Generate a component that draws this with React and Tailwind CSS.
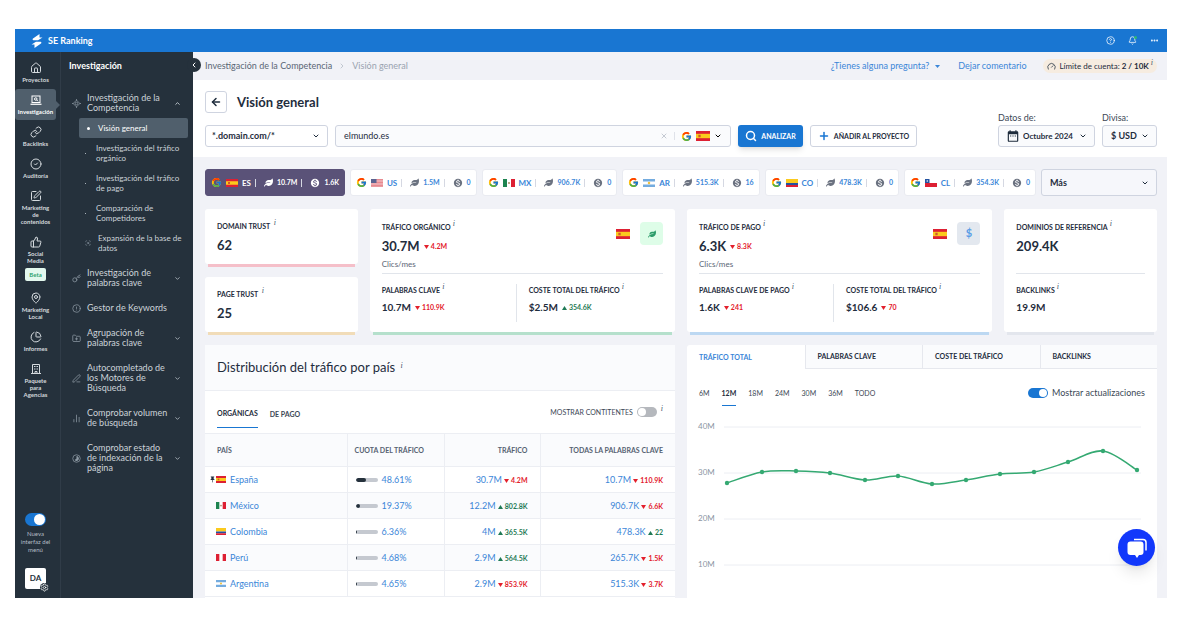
import React, { useState } from 'react';
import {
  ArrowLeft,
  Bell,
  ChartNoAxesColumn,
  ChevronDown,
  ChevronLeft,
  ChevronRight,
  ChevronUp,
  CircleAlert,
  CircleCheck,
  CircleHelp,
  Ellipsis,
  FolderPlus,
  Gauge,
  House,
  Key,
  Link,
  MapPin,
  PenLine,
  PieChart,
  Plus,
  ScanSearch,
  Search,
  Settings,
  SquarePen,
  ThumbsUp,
  X,
} from 'lucide-react';
import { FcGoogle } from 'react-icons/fc';
import { FaLeaf } from 'react-icons/fa';
import { MdDateRange, MdMonetizationOn, MdPushPin } from 'react-icons/md';

const railItems = [
  { label: 'Proyectos', icon: House },
  { label: 'Investigación', icon: LaptopSearch, active: true },
  { label: 'Backlinks', icon: Link },
  { label: 'Auditoría', icon: CircleCheck },
  { label: 'Marketing de contenidos', icon: SquarePen },
  { label: 'Social Media', icon: ThumbsUp, badge: 'Beta' },
  { label: 'Marketing Local', icon: MapPin },
  { label: 'Informes', icon: PieChart },
  { label: 'Paquete para Agencias', icon: Office },
];

const subItems = [
  'Investigación del tráfico orgánico',
  'Investigación del tráfico de pago',
  'Comparación de Competidores',
];

const menuItems = [
  { label: 'Investigación de palabras clave', icon: Key, arrow: true },
  { label: 'Gestor de Keywords', icon: CircleAlert },
  { label: 'Agrupación de palabras clave', icon: FolderPlus, arrow: true },
  { label: 'Autocompletado de los Motores de Búsqueda', icon: PenLine, arrow: true },
  { label: 'Comprobar volumen de búsqueda', icon: ChartNoAxesColumn, arrow: true },
  { label: 'Comprobar estado de indexación de la página', icon: IndexStatus, arrow: true },
];

const markets = [
  { code: 'ES', organic: '10.7M', paid: '1.6K' },
  { code: 'US', organic: '1.5M', paid: '0' },
  { code: 'MX', organic: '906.7K', paid: '0' },
  { code: 'AR', organic: '515.3K', paid: '16' },
  { code: 'CO', organic: '478.3K', paid: '0' },
  { code: 'CL', organic: '354.3K', paid: '0' },
];

const countries = [
  { code: 'ES', name: 'España', share: 48.61, traffic: '30.7M', diff: '4.2M', up: false, keywords: '10.7M', kwDiff: '110.9K', kwUp: false, pinned: true },
  { code: 'MX', name: 'México', share: 19.37, traffic: '12.2M', diff: '802.8K', up: true, keywords: '906.7K', kwDiff: '6.6K', kwUp: false },
  { code: 'CO', name: 'Colombia', share: 6.36, traffic: '4M', diff: '365.5K', up: true, keywords: '478.3K', kwDiff: '22', kwUp: true },
  { code: 'PE', name: 'Perú', share: 4.68, traffic: '2.9M', diff: '564.5K', up: true, keywords: '265.7K', kwDiff: '1.5K', kwUp: false },
  { code: 'AR', name: 'Argentina', share: 4.65, traffic: '2.9M', diff: '853.9K', up: false, keywords: '515.3K', kwDiff: '3.7K', kwUp: false },
];

const chartTabs = ['TRÁFICO TOTAL', 'PALABRAS CLAVE', 'COSTE DEL TRÁFICO', 'BACKLINKS'];
const ranges = ['6M', '12M', '18M', '24M', '30M', '36M', 'TODO'];

const trafficPoints = [
  [40, 72], [75, 61], [109, 60], [143, 62], [178, 69], [211, 65], [245, 73],
  [279, 69], [313, 63], [347, 61], [381, 51], [416, 40], [450, 59],
];

function LaptopSearch({ className }) {
  return (
    <svg viewBox="0 0 24 24" fill="none" stroke="currentColor" strokeWidth="2" className={className}>
      <rect x="4" y="4" width="16" height="13" />
      <path d="M1 20.5h22" strokeWidth="2.5" />
      <circle cx="11.5" cy="10" r="2.5" />
      <path d="m13.5 12 2.5 2.5" />
    </svg>
  );
}

function Office({ className }) {
  return (
    <svg viewBox="0 0 24 24" fill="none" stroke="currentColor" strokeWidth="2" className={className}>
      <path d="M5 21V3h14v18M2 21h20M10 21v-4h4v4" />
      <path d="M9 6v2M12 6v2M15 6v2M9 11v2M12 11v2M15 11v2" />
    </svg>
  );
}

function Competitor({ className }) {
  return (
    <svg viewBox="0 0 24 24" fill="none" stroke="currentColor" strokeWidth="2" className={className}>
      <path d="M12 3 21 12 12 21 3 12z" />
      <circle cx="12" cy="12" r="3.5" />
      <path d="M12 0v4M12 20v4M0 12h4M20 12h4" />
    </svg>
  );
}

function IndexStatus({ className }) {
  return (
    <svg viewBox="0 0 24 24" fill="none" stroke="currentColor" strokeWidth="2" className={className}>
      <circle cx="12" cy="12" r="10" />
      <path d="M12 5.5a6.5 6.5 0 1 1-5 10.700L12 12z" fill="currentColor" stroke="none" />
    </svg>
  );
}

function Logo() {
  return (
    <svg viewBox="0 0 24 28" fill="white" className="h-3.5 w-3">
      <path d="M17 0 4 9c-1.500 1.200-.8 3.500 1 3.500h9L23 7h-6z" />
      <path d="m7 28 13-9c1.500-1.200.8-3.500-1-3.500h-9L1 21h6z" />
    </svg>
  );
}

function Flag({ code, className = 'h-2 w-3' }) {
  return (
    <svg viewBox="0 0 24 16" preserveAspectRatio="none" className={`shrink-0 ${className}`}>
      {code === 'ES' && (
        <>
          <path fill="#dd2033" d="M0 0h24v16H0z" />
          <path fill="#fbca1d" d="M0 4.500h24v7H0z" />
          <path fill="#cf5a2a" d="M4 6h4v4H4z" />
        </>
      )}
      {code === 'US' && (
        <>
          <path fill="#f3c9cd" d="M0 0h24v16H0z" />
          <path stroke="#e0686f" strokeWidth="1.3" d="M0 1h24M0 4h24M0 7h24M0 10h24M0 13h24M0 15.500h24" />
          <path fill="#5b6390" d="M0 0h11v8H0z" />
        </>
      )}
      {code === 'MX' && (
        <>
          <path fill="#fff" d="M0 0h24v16H0z" />
          <path fill="#1d8450" d="M0 0h8v16H0z" />
          <path fill="#dd2033" d="M16 0h8v16h-8z" />
          <circle cx="12" cy="8" r="2" fill="#a98a63" />
        </>
      )}
      {code === 'AR' && (
        <>
          <path fill="#fff" d="M0 0h24v16H0z" />
          <path fill="#74acdf" d="M0 0h24v5H0zM0 11h24v5H0z" />
          <circle cx="12" cy="8" r="2.500" fill="#f3c23c" />
        </>
      )}
      {code === 'CO' && (
        <>
          <path fill="#fbca1d" d="M0 0h24v8H0z" />
          <path fill="#2452a0" d="M0 8h24v4H0z" />
          <path fill="#dd2033" d="M0 12h24v4H0z" />
        </>
      )}
      {code === 'CL' && (
        <>
          <path fill="#fff" d="M8 0h16v8H8z" />
          <path fill="#dd2033" d="M0 8h24v8H0z" />
          <path fill="#2452a0" d="M0 0h9v8H0z" />
          <circle cx="4.500" cy="4" r="1.500" fill="#fff" />
        </>
      )}
      {code === 'PE' && (
        <>
          <path fill="#fff" d="M0 0h24v16H0z" />
          <path fill="#dd2033" d="M0 0h8v16H0zM16 0h8v16h-8z" />
        </>
      )}
    </svg>
  );
}

function Info() {
  return <sup className="ml-0.5 font-['Liberation_Serif',serif] text-[8px] font-normal italic text-slate-600">i</sup>;
}

function Diff({ up, value }) {
  return (
    <span className={`text-[7px] font-bold ${up ? 'text-[#1f7a55]' : 'text-[#e3202c]'}`}>
      <svg viewBox="0 0 10 8" fill="currentColor" className="mr-[2px] inline h-1 w-[5px]">
        <path d={up ? 'M5 0l5 8H0z' : 'M0 0h10L5 8z'} />
      </svg>
      {value}
    </span>
  );
}

function Picker({ id, label, options, wrap, className, icon }) {
  return (
    <div className={`relative flex items-center ${wrap}`}>
      {icon}
      <select
        id={id}
        aria-label={label}
        className={`w-full appearance-none rounded-[3px] border border-[#cfd4e0] font-bold text-[#1f2d3d] outline-none ${className}`}
      >
        {options.map((option) => (
          <option key={option}>{option}</option>
        ))}
      </select>
      <ChevronDown strokeWidth={3} className="pointer-events-none absolute right-2 size-2 text-[#1f2d3d]" />
    </div>
  );
}

function Toggle({ id, checked, onChange, className }) {
  return (
    <input
      id={id}
      type="checkbox"
      checked={checked}
      onChange={(e) => onChange(e.target.checked)}
      className={`shrink-0 appearance-none rounded-full bg-[#b5b8bd] p-px before:block before:rounded-full before:bg-white checked:bg-[#1976d2] ${className}`}
    />
  );
}

function Rail() {
  const [newMenu, setNewMenu] = useState(true);

  return (
    <nav className="flex w-[46px] shrink-0 flex-col items-center border-r border-[#303c48] pt-[5px] pb-[9px] text-[6px] leading-[7px] font-bold text-[#d5dade]">
      <div className="flex w-full flex-col gap-px">
        {railItems.map(({ label, icon: Icon, active, badge }) => (
          <a
            key={label}
            href="#"
            className={`relative mr-1 flex flex-col items-center gap-[2px] py-[5px] text-center ${active ? 'rounded-[3px] bg-[#505f6c] text-white' : ''}`}
          >
            <Icon className="size-3" />
            <span className={active ? '' : 'w-[31px]'}>{label}</span>
            {badge && (
              <span className="mt-[2px] rounded-[2px] bg-[#e3f8ee] px-1 py-[3px] text-[#2fa36f]">{badge}</span>
            )}
            {active && (
              <span className="absolute top-1/2 -right-1 -translate-y-1/2 border-y-4 border-l-4 border-y-transparent border-l-[#505f6c]" />
            )}
          </a>
        ))}
      </div>
      <div className="mt-auto mr-1 flex flex-col items-center gap-1">
        <Toggle id="new-menu" checked={newMenu} onChange={setNewMenu} className="h-[13px] w-[21px] before:size-[11px] checked:before:translate-x-2" />
        <label htmlFor="new-menu" className="w-[34px] text-center leading-[8px] font-normal text-[#b3bcc4]">
          Nueva interfaz del menú
        </label>
      </div>
      <button type="button" aria-label="Cuenta" className="relative mt-[14px] mr-1 size-[21px] rounded-[2px] bg-white text-[8px] text-[#25313c]">
        DA
        <Settings className="absolute -right-[3px] -bottom-[3px] size-[9px] rounded-full bg-[#25313c] text-white" />
      </button>
    </nav>
  );
}

function Submenu() {
  return (
    <aside className="relative w-[132px] shrink-0 pt-[9px] text-[9px] leading-[10px] text-[#ccd3d9]">
      <h2 className="pl-2 font-bold text-white">Investigación</h2>
      <button
        type="button"
        aria-label="Contraer menú"
        className="absolute top-1.5 -right-2 z-10 flex size-3.5 items-center justify-center rounded-full bg-[#25313c] text-white"
      >
        <ChevronLeft strokeWidth={3} className="size-2" />
      </button>

      <a href="#" className="mt-[22px] flex items-center pr-3 pl-[11px]">
        <Competitor className="size-[9px] shrink-0 text-[#8d99a4]" />
        <span className="ml-1.5 flex-1 pr-2">Investigación de la Competencia</span>
        <ChevronUp strokeWidth={3} className="size-[7px]" />
      </a>
      <ul className="mt-[5px] mb-[15px] flex flex-col gap-2.5 pr-[5px] pl-[18px] text-[8px]">
        <li className="-mb-[5px]">
          <a href="#" className="flex h-5 items-center rounded-[2px] bg-[#505f6c] text-white">
            <span className="mx-2 size-[3px] rounded-full bg-white" />
            Visión general
          </a>
        </li>
        {subItems.map((item) => (
          <li key={item}>
            <a href="#" className="flex items-center">
              <span className="mr-2.5 ml-1.5 size-px shrink-0 bg-[#aab3bb]" />
              <span>{item}</span>
            </a>
          </li>
        ))}
        <li>
          <a href="#" className="flex items-center gap-[7px] pl-1.5">
            <ScanSearch className="size-1.5 shrink-0 text-[#8d99a4]" />
            Expansión de la base de datos
          </a>
        </li>
      </ul>

      <ul className="flex flex-col gap-[15px] pr-3 pl-[11px]">
        {menuItems.map(({ label, icon: Icon, arrow }) => (
          <li key={label}>
            <a href="#" className="flex items-center">
              <Icon className="size-[9px] shrink-0 text-[#8d99a4]" />
              <span className="ml-1.5 flex-1">{label}</span>
              {arrow && <ChevronDown strokeWidth={3} className="ml-1.5 size-[7px] shrink-0 text-[#aab3bb]" />}
            </a>
          </li>
        ))}
      </ul>
    </aside>
  );
}

function SearchHeader() {
  return (
    <header className="bg-white pt-[11px] pr-2.5 pb-2.5 pl-3">
      <div className="flex items-center gap-2.5">
        <button type="button" aria-label="Volver" className="flex size-[22px] items-center justify-center rounded-[3px] border border-[#cfd4e0] text-[#1f2d3d]">
          <ArrowLeft strokeWidth={3} className="size-3" />
        </button>
        <h1 className="text-[13px] leading-4 font-bold text-[#1f2d3d]">Visión general</h1>
      </div>

      <form className="flex items-end gap-[7px]" onSubmit={(e) => e.preventDefault()}>
        <Picker label="Ámbito" options={['*.domain.com/*']} wrap="w-[123px]" className="h-[22px] pl-1.5 text-[9px]" />
        <div className="flex h-[22px] min-w-0 flex-1 items-center rounded-[3px] border border-[#cfd4e0] bg-[#fafbfd] px-2">
          <input aria-label="Dominio" defaultValue="elmundo.es" className="min-w-0 flex-1 bg-transparent text-[9px] text-[#1f2d3d] outline-none" />
          <button type="button" aria-label="Borrar" className="text-[#a9b1bc]">
            <X className="size-2" />
          </button>
          <span className="mx-1.5 h-2 w-px bg-[#dfe2e9]" />
          <button type="button" aria-label="Buscador" className="flex items-center gap-1">
            <FcGoogle className="size-[11px]" />
            <Flag code="ES" className="h-2.5 w-3.5" />
            <ChevronDown strokeWidth={3} className="size-2" />
          </button>
        </div>
        <button type="submit" className="flex h-[22px] w-[65px] items-center justify-center gap-1 rounded-[3px] bg-[#1976d2] text-[7px] font-bold text-white shadow-md">
          <Search strokeWidth={3} className="size-3" />
          ANALIZAR
        </button>
        <button type="button" className="flex h-[22px] w-[107px] items-center justify-center gap-1 rounded-[3px] border border-[#cfd4e0] text-[7px] font-bold text-[#1f2d3d]">
          <Plus strokeWidth={3} className="size-3 text-[#1976d2]" />
          AÑADIR AL PROYECTO
        </button>
        <div className="ml-[74px] text-[9px] text-[#3c4856]">
          <label htmlFor="month" className="block leading-[10px]">Datos de:</label>
          <Picker
            id="month"
            options={['Octubre 2024']}
            wrap="mt-0.5 w-[97px]"
            className="h-[22px] bg-[#fafbfd] pl-6 text-[8px]"
            icon={<MdDateRange className="pointer-events-none absolute left-2 size-3.5 text-[#1f2d3d]" />}
          />
        </div>
        <div className="text-[9px] text-[#3c4856]">
          <label htmlFor="currency" className="block leading-[10px]">Divisa:</label>
          <Picker id="currency" options={['$ USD']} wrap="mt-0.5 w-[55px]" className="h-[22px] bg-[#fafbfd] pl-2" />
        </div>
      </form>
    </header>
  );
}

function Markets() {
  return (
    <div className="flex gap-[5px]">
      {markets.map(({ code, organic, paid }, i) => {
        const active = i === 0;
        return (
          <button
            key={code}
            type="button"
            className={`flex h-[27px] flex-auto items-center justify-center gap-1 rounded-[3px] border text-[7px] font-bold ${
              active ? 'border-[#5a5278] bg-[#5a5278] text-white' : 'border-[#e9ebf1] bg-white text-[#3b86d8]'
            }`}
          >
            <FcGoogle className="size-[11px]" />
            <Flag code={code} />
            <span className="text-[8px]">{code}</span>
            <span className="h-2 w-px bg-[#d5d8e2]" />
            <FaLeaf className={`ml-1 size-[9px] ${active ? '' : 'text-[#6b7280]'}`} />
            {organic}
            <span className="h-2 w-px bg-[#d5d8e2]" />
            <MdMonetizationOn className={`ml-1 size-[10px] ${active ? '' : 'text-[#6b7280]'}`} />
            {paid}
          </button>
        );
      })}
      <Picker label="Más países" options={['Más']} wrap="w-[116px]" className="h-[27px] bg-[#f6f7fb] pl-2 text-[9px]" />
    </div>
  );
}

function Trust({ title, value, edge }) {
  return (
    <section className={`rounded-[3px] bg-white px-3 pt-3 pb-[11px] text-[#1f2d3d] ${edge}`}>
      <h3 className="text-[7px] leading-[10px] font-bold">{title} <Info /></h3>
      <p className="mt-1.5 text-[13px] leading-4 font-bold">{value}</p>
    </section>
  );
}

function Metric({ title, value, up, diff }) {
  return (
    <div className="pt-px">
      <h3 className="text-[7px] leading-[10px] font-bold whitespace-nowrap">{title}<Info /></h3>
      <p className="mt-1 flex items-center gap-1 text-[10px] leading-4 font-bold">
        {value}
        {diff && <Diff up={up} value={diff} />}
      </p>
    </div>
  );
}

function Traffic({ title, value, diff, edge, badge, children }) {
  return (
    <section className={`rounded-[3px] bg-white px-3 pt-[13px] pb-2.5 text-[#1f2d3d] ${edge}`}>
      <div className="flex h-[52px] items-start border-b border-[#e1e5eb]">
        <div className="flex-1">
          <h3 className="text-[7px] leading-[10px] font-bold whitespace-nowrap">{title}<Info /></h3>
          <p className="mt-1.5 flex items-center gap-1 text-[13px] leading-4 font-bold">
            {value}
            {diff && <Diff value={diff} />}
          </p>
          {diff && <p className="mt-1 text-[8px] leading-3 text-[#5a6675]">Clics/mes</p>}
        </div>
        {badge}
      </div>
      <div className="mt-2.5">{children}</div>
    </section>
  );
}

function Summary() {
  return (
    <div className="grid grid-cols-[1fr_2fr_2fr_1fr] gap-3">
      <div className="grid gap-[13px]">
        <Trust title="DOMAIN TRUST" value="62" edge="shadow-[0_6px_0_-3px_#f5bfc9]" />
        <Trust title="PAGE TRUST" value="25" edge="shadow-[0_6px_0_-3px_#f1dcb8]" />
      </div>
      <Traffic
        title="TRÁFICO ORGÁNICO"
        value="30.7M"
        diff="4.2M"
        edge="shadow-[0_6px_0_-3px_#b5e0cc]"
        badge={
          <div className="flex items-center gap-2.5">
            <Flag code="ES" className="h-2.5 w-3.5" />
            <span className="flex size-[23px] items-center justify-center rounded-[4px] bg-[#defde8]">
              <FaLeaf className="size-2 text-[#2c9c6a]" />
            </span>
          </div>
        }
      >
        <div className="grid grid-cols-[134px_1fr]">
          <Metric title="PALABRAS CLAVE" value="10.7M" diff="110.9K" />
          <div className="h-[38px] border-l border-[#e1e5eb] pl-3">
            <Metric title="COSTE TOTAL DEL TRÁFICO" value="$2.5M" diff="354.6K" up />
          </div>
        </div>
      </Traffic>
      <Traffic
        title="TRÁFICO DE PAGO"
        value="6.3K"
        diff="8.3K"
        edge="shadow-[0_6px_0_-3px_#bcd8f2]"
        badge={
          <div className="flex items-center gap-2.5">
            <Flag code="ES" className="h-2.5 w-3.5" />
            <span className="flex size-[23px] items-center justify-center rounded-[4px] bg-[#e3e8ef] text-[11px] font-bold text-[#5a9ee6]">
              $
            </span>
          </div>
        }
      >
        <div className="grid grid-cols-[134px_1fr]">
          <Metric title="PALABRAS CLAVE DE PAGO" value="1.6K" diff="241" />
          <div className="h-[38px] border-l border-[#e1e5eb] pl-3">
            <Metric title="COSTE TOTAL DEL TRÁFICO" value="$106.6" diff="70" />
          </div>
        </div>
      </Traffic>
      <Traffic title="DOMINIOS DE REFERENCIA" value="209.4K" edge="shadow-[0_6px_0_-3px_#e3e6ed]">
        <Metric title="BACKLINKS" value="19.9M" />
      </Traffic>
    </div>
  );
}

function CountryTable() {
  const [continents, setContinents] = useState(false);

  return (
    <section className="rounded-t-[3px] bg-white text-[#1f2d3d]">
      <h2 className="flex h-[46px] items-center border-b border-[#eceef3] bg-[#fafbfd] px-3 text-[13px]">
        <span>Distribución del tráfico por país <Info /></span>
      </h2>
      <div className="flex h-[42px] items-center px-3 text-[7px] font-bold">
        <button type="button" className="mt-1 border-b border-[#1976d2] py-2">ORGÁNICAS</button>
        <button type="button" className="mt-1 ml-3 py-2 text-[#3c4856]">DE PAGO</button>
        <label htmlFor="continents" className="ml-auto mr-1 font-normal text-[#3c4856]">MOSTRAR CONTITENTES</label>
        <Toggle id="continents" checked={continents} onChange={setContinents} className="h-2.5 w-5 before:size-2 checked:before:translate-x-2.5" />
        <span className="ml-0.5"><Info /></span>
      </div>
      <table className="w-full table-fixed border-collapse text-right text-[9px] text-[#3b86d8]">
        <thead>
          <tr className="h-[33px] border-y border-[#eceef3] bg-[#fafbfd] text-[7px] text-[#566272]">
            <th className="w-[142px] border-r border-[#eceef3] pl-3 text-left">PAÍS</th>
            <th className="w-[97px] border-r border-[#eceef3] pl-[7px] text-left">CUOTA DEL TRÁFICO</th>
            <th className="w-[96px] border-r border-[#eceef3] pr-3">TRÁFICO</th>
            <th className="pr-3">TODAS LA PALABRAS CLAVE</th>
          </tr>
        </thead>
        <tbody>
          {countries.map((row) => (
            <tr key={row.name} className="h-[26px] border-b border-[#eceef3] even:bg-[#fafbfd]">
              <td className="border-r border-[#eceef3] pl-1 text-left">
                <div className="flex items-center">
                  <span className="w-[7px]">{row.pinned && <MdPushPin className="size-[7px] text-[#1f2d3d]" />}</span>
                  <Flag code={row.code} className="h-[7px] w-[10px]" />
                  <a href="#" className="ml-1">{row.name}</a>
                </div>
              </td>
              <td className="border-r border-[#eceef3] pl-2 text-left">
                <div className="flex items-center gap-1">
                  <span className="h-1 w-[22px] overflow-hidden rounded-full bg-[#c5c9d0]">
                    <span className="block h-full rounded-full bg-[#25313c]" style={{ width: `${row.share}%` }} />
                  </span>
                  {row.share}%
                </div>
              </td>
              <td className="border-r border-[#eceef3] pr-3">
                {row.traffic} <Diff up={row.up} value={row.diff} />
              </td>
              <td className="pr-3">
                {row.keywords} <Diff up={row.kwUp} value={row.kwDiff} />
              </td>
            </tr>
          ))}
        </tbody>
      </table>
    </section>
  );
}

function smoothPath(points) {
  // Catmull-Rom spline written as cubic segments
  return points.reduce((path, [x, y], i) => {
    if (i === 0) return `M${x} ${y}`;
    const prev = points[i - 1];
    const before = points[i - 2] || prev;
    const after = points[i + 1] || [x, y];
    const c1 = [prev[0] + (x - before[0]) / 6, prev[1] + (y - before[1]) / 6];
    const c2 = [x - (after[0] - prev[0]) / 6, y - (after[1] - prev[1]) / 6];
    return `${path} C${c1} ${c2} ${x} ${y}`;
  }, '');
}

function TrafficChart() {
  const [updates, setUpdates] = useState(true);

  return (
    <section className="rounded-t-[3px] bg-white text-[7px] text-[#1f2d3d]">
      <div className="grid grid-cols-4 font-bold">
        {chartTabs.map((tab, i) => (
          <button
            key={tab}
            type="button"
            className={`h-6 px-3 text-left ${i === 0 ? 'text-[#3b86d8]' : 'border-b border-l border-[#e6e8ee] bg-[#fafbfd]'}`}
          >
            {tab}
          </button>
        ))}
      </div>
      <div className="flex h-[42px] items-center gap-3 px-3">
        {ranges.map((range) => (
          <button
            key={range}
            type="button"
            className={`mt-3.5 border-b pb-1.5 ${range === '12M' ? 'border-[#1976d2] font-bold' : 'border-transparent text-[#3c4856]'}`}
          >
            {range}
          </button>
        ))}
        <div className="ml-auto flex items-center gap-1 pt-1.5 text-[9px] text-[#3c4856]">
          <Toggle id="updates" checked={updates} onChange={setUpdates} className="h-2.5 w-5 before:size-2 checked:before:translate-x-2.5" />
          <label htmlFor="updates">Mostrar actualizaciones</label>
        </div>
      </div>
      <svg viewBox="0 0 470 187" className="w-full">
        {['40M', '30M', '20M', '10M'].map((label, i) => (
          <g key={label}>
            <text x="11" y={18 + i * 46} fontSize="8" fill="#8b95a3">{label}</text>
            <path d={`M37 ${16 + i * 46}H454`} stroke="#eceef3" />
          </g>
        ))}
        <path d={smoothPath(trafficPoints)} fill="none" stroke="#35a972" strokeWidth="1.500" />
        {trafficPoints.map(([x, y]) => (
          <circle key={x} cx={x} cy={y} r="2.200" fill="#35a972" />
        ))}
      </svg>
    </section>
  );
}

export default function App() {
  return (
    <div className="h-screen bg-white pt-[29px] pr-[33px] pb-[29px] pl-[15px] font-[Lato,sans-serif]">
      <div className="relative flex h-full flex-col overflow-hidden">
        <div className="flex h-[23px] shrink-0 items-center bg-[#1976d2] px-4 text-white">
          <Logo />
          <span className="ml-[5px] text-[9px] font-bold">SE Ranking</span>
          <div className="ml-auto -mr-2 flex items-center gap-[13px]">
            <button type="button" aria-label="Ayuda"><CircleHelp className="size-[9px]" /></button>
            <button type="button" aria-label="Avisos" className="relative">
              <Bell className="size-[9px]" />
              <span className="absolute top-0 right-0 size-[3px] rounded-full bg-[#2eb872]" />
            </button>
            <button type="button" aria-label="Más opciones"><Ellipsis strokeWidth={3} className="size-[9px]" /></button>
          </div>
        </div>

        <div className="flex min-h-0 flex-1">
          <div className="flex bg-[#25313c]">
            <Rail />
            <Submenu />
          </div>

          <main className="min-w-0 flex-1 overflow-hidden bg-[#f1f2f7]">
            <div className="flex h-7 items-center pr-2.5 pl-3 text-[9px] text-[#3b86d8]">
              <a href="#" className="text-[#5a6675]">Investigación de la Competencia</a>
              <ChevronRight className="mx-1.5 size-2 text-[#a9b1bc]" />
              <span className="text-[#9aa3b0]">Visión general</span>
              <button type="button" className="ml-auto flex items-center gap-1.5">
                ¿Tienes alguna pregunta?
                <svg viewBox="0 0 10 6" fill="currentColor" className="h-[3px] w-[5px]"><path d="M0 0h10L5 6z" /></svg>
              </button>
              <a href="#" className="mr-4 ml-[18px]">Dejar comentario</a>
              <span className="flex h-3.5 items-center gap-1 rounded-full bg-[#f6ece0] px-1 text-[8px] text-[#1f2d3d]">
                <Gauge className="size-[9px]" />
                <span>Límite de cuenta: <b>2 / 10K</b><Info /></span>
              </span>
            </div>

            <SearchHeader />

            <div className="flex flex-col gap-[13px] pt-3 pr-2.5 pl-3">
              <Markets />
              <Summary />
              <div className="grid grid-cols-2 gap-3">
                <CountryTable />
                <TrafficChart />
              </div>
            </div>
          </main>
        </div>

        <button
          type="button"
          aria-label="Abrir chat"
          className="absolute right-3 bottom-8 flex size-[37px] items-center justify-center rounded-full bg-[#1238fb] shadow-lg"
        >
          <svg viewBox="0 0 24 24" className="size-6">
            <path d="M9 3.500h9a3 3 0 0 1 3 3v8" fill="none" stroke="white" strokeWidth="1.500" />
            <path d="M5.500 5.500h10a3 3 0 0 1 3 3V16a3 3 0 0 1-3 3H14l-2 3-2-3H5.500a3 3 0 0 1-3-3V8.500a3 3 0 0 1 3-3z" fill="white" />
          </svg>
        </button>
      </div>
    </div>
  );
}
